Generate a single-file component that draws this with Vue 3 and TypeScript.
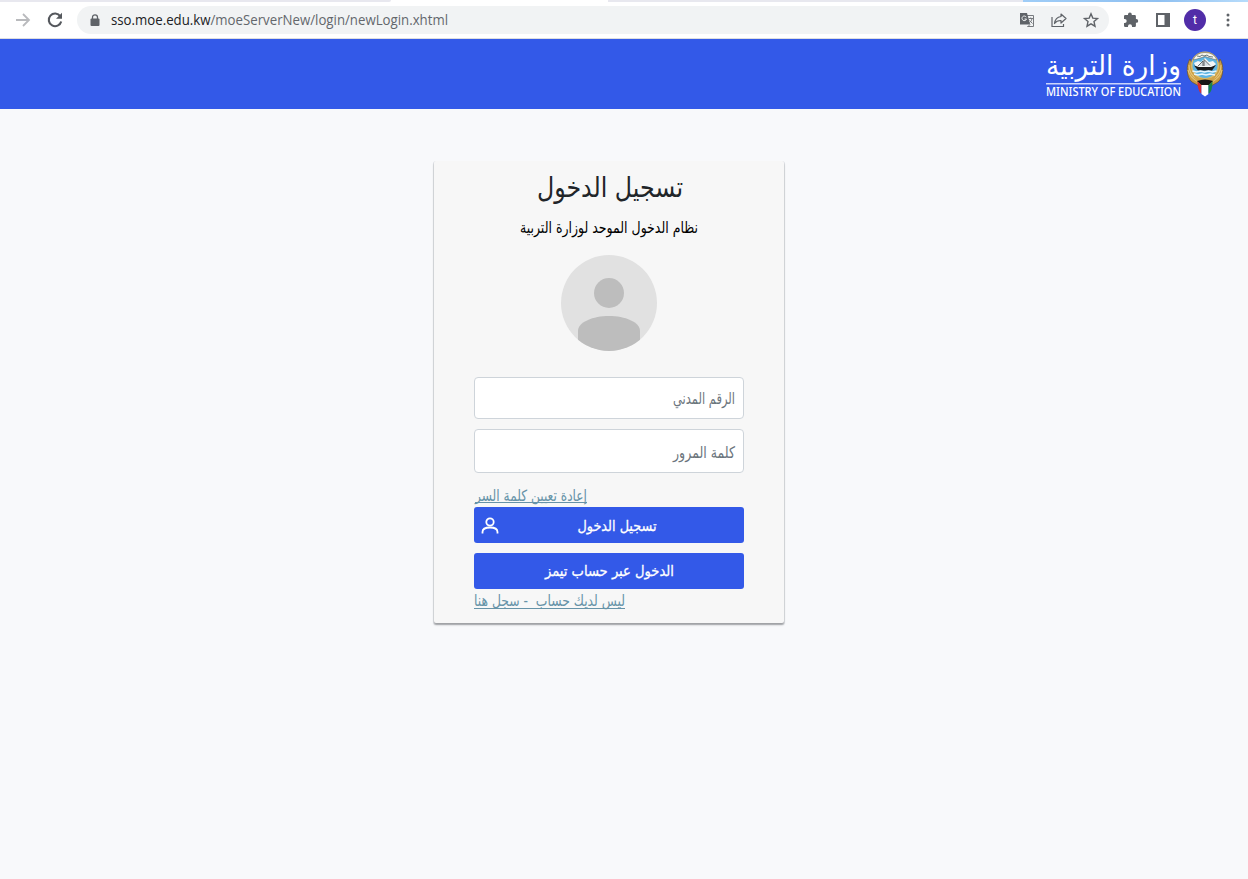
<script setup lang="ts">
import { ref } from 'vue'

interface Field {
  id: string
  type: string
  label: string
  width: number
}

const host = 'sso.moe.edu.kw'
const path = '/moeServerNew/login/newLogin.xhtml'

const fields: Field[] = [
  { id: 'civil', type: 'text', label: 'الرقم المدني', width: 62 },
  { id: 'password', type: 'password', label: 'كلمة المرور', width: 62 },
]
const values = ref<Record<string, string>>({ civil: '', password: '' })
</script>

<template>
  <div class="page">
    <div class="tabs"><i class="left"></i><i class="mid"></i><i class="right"></i></div>
    <div class="toolbar">
      <svg class="ic fwd" width="20" height="20" viewBox="0 0 20 20"><path d="M3 10h13M10 4l6 6-6 6" fill="none" stroke="#b9babd" stroke-width="1.8" /></svg>
      <svg class="ic reload" width="20" height="20" viewBox="0 0 20 20"><path d="M15.3 6.3A6.3 6.3 0 1 0 16.2 11.400" fill="none" stroke="#55585d" stroke-width="2.1" /><path d="M17 2.800v6h-6z" fill="#55585d" /></svg>
      <div class="omnibox">
        <svg class="lock" width="10" height="13" viewBox="0 0 10 13"><path d="M2.500 5V3.300a2.500 2.500 0 0 1 5 0V5" fill="none" stroke="#5f6368" stroke-width="1.300" /><rect x="0.500" y="4.500" width="9" height="7.500" rx="1" fill="#5f6368" /></svg>
        <svg class="url" width="345" height="22"><text x="0" y="16" textLength="337" lengthAdjust="spacingAndGlyphs"><tspan fill="#202124">{{ host }}</tspan><tspan fill="#63676c">{{ path }}</tspan></text></svg>
        <div class="actions">
          <svg width="16" height="16" viewBox="0 0 16 16"><path d="M6.500 3.500h8v11H8.500" fill="#f1f3f4" stroke="#777a7e" /><path d="M1 1h7l3.200 11.500H1z" fill="#5f6368" /><path d="M7.300 5.200A2.300 2.300 0 1 0 7.500 7H5.500" fill="none" stroke="#f1f3f4" stroke-width="1" /><path d="M9.500 6.500h4.500M11.700 5.500v1M13 6.500c-.5 2.500-1.500 3.500-3 4.500M10.500 8.500l3 3M8.500 15l2.500-2.500" fill="none" stroke="#777a7e" /></svg>
          <svg width="16" height="16" viewBox="0 0 16 16"><path d="M1 5v9.500h11.500V12" fill="none" stroke="#5f6368" stroke-width="1.200" /><path d="M10 2l5 4.500-5 4.500V8.500C7 8.400 5 9.400 3.500 11.500 4 7.500 6 5 10 4.500z" fill="none" stroke="#5f6368" stroke-width="1.200" stroke-linejoin="round" /></svg>
          <svg width="16" height="16" viewBox="0 0 16 16"><path d="M8 1.800l1.800 4.300 4.700.4-3.500 3.100 1 4.600L8 11.800l-4 2.400 1-4.600-3.500-3.100 4.700-.4z" fill="none" stroke="#5f6368" stroke-width="1.400" /></svg>
        </div>
      </div>
      <svg class="puzzle" width="16" height="16" viewBox="0 0 16 16"><path d="M1 4.200Q1 3 2.200 3H5V2.500a1.900 1.900 0 0 1 3.800 0V3h2.900q1.200 0 1.200 1.200V7h.4a1.900 1.900 0 0 1 0 3.800h-.4v3q0 1.200-1.200 1.200H9v-.7a2 2 0 0 0-4 0v.7H2.200Q1 15 1 13.800V11h.7a2 2 0 0 0 0-4H1z" fill="#5f6368" /></svg>
      <svg class="panel" width="14" height="14" viewBox="0 0 14 14"><path d="M0 0h14v14H0zM2 2v10h6.500V2z" fill="#5f6368" fill-rule="evenodd" /></svg>
      <div class="profile">t</div>
      <svg class="dots" width="4" height="14" viewBox="0 0 4 14"><circle v-for="n in 3" :key="n" cx="2" :cy="n * 5 - 3" r="1.500" fill="#5f6368" /></svg>
    </div>

    <header class="banner">
      <svg class="brand" width="138" height="50" viewBox="0 0 138 50">
        <text class="brand-ar" x="68.500" y="24.500" text-anchor="middle" textLength="135" lengthAdjust="spacingAndGlyphs">وزارة التربية</text>
        <rect x="1" y="33" width="135" height="1.500" fill="#cbd5fb" />
        <text class="brand-en" x="1" y="45.500" textLength="135" lengthAdjust="spacingAndGlyphs">MINISTRY OF EDUCATION</text>
      </svg>
      <svg class="emblem" width="38" height="46" viewBox="0 0 38 46">
        <path d="M4 8C0 14 0 26 6 31l7 4h12l7-4c6-5 6-17 2-23l-3 9-11 10L8 17z" fill="#c99b42" stroke="#6d5527" stroke-width=".7" />
        <path d="M3 14c0 7 4 12 9 15M2 19c1 6 5 9 10 12M35 14c0 7-4 12-9 15M36 19c-1 6-5 9-10 12" fill="none" stroke="#e6c577" stroke-width="1.100" />
        <circle cx="19" cy="14.500" r="13.300" fill="#5db4e2" stroke="#d9bb69" stroke-width="1.500" />
        <path d="M7 9q3-7.500 12-7.500T31 9l-4-1-8-2.500L11 8z" fill="#f8f7ed" stroke="#555" stroke-width=".5" />
        <path d="M11 5l3 .500 2-1.500 2 1 3-1 2 1.500 4 .500" fill="none" stroke="#45555a" stroke-width=".8" />
        <path d="M8 12l4-2 3 1 4-4 4 4 4-1 3 3-3 3H10z" fill="#f4f6f6" />
        <path d="M12 15l5-5v5M18 15V8.500l6 6" fill="#d8dee1" stroke="#41474a" stroke-width=".8" />
        <path d="M8 14.500l5 1.500h12l5-2-4 5.500H12z" fill="#191919" />
        <path d="M6.500 20l4 1 4-1 4 1 4-1 4 1 4-1M8 23l4 1 4-1 4 1 4-1 5 1" fill="none" stroke="#e5f6ff" stroke-width="1.300" />
        <path d="M8 25q11 6 22 0l-4 7H12z" fill="#d0a347" />
        <path d="M11 30q8-3 16 0l-4 4h-8z" fill="#171717" />
        <path d="M11.500 30.500l4 3.500v9q-4-3-4-12.500" fill="#d72e35" />
        <path d="M15.500 34h7v9L19 45.500 15.500 43z" fill="#fff" />
        <path d="M22.500 34l4-3.500q0 10-4 12.500z" fill="#16834c" />
      </svg>
    </header>

    <main>
      <form class="card" @submit.prevent>
        <svg class="title" width="350" height="48"><text x="176" y="36" text-anchor="middle" textLength="146" lengthAdjust="spacingAndGlyphs">تسجيل الدخول</text></svg>
        <svg class="subtitle" width="350" height="46"><text x="175" y="24" text-anchor="middle" textLength="178" lengthAdjust="spacingAndGlyphs">نظام الدخول الموحد لوزارة التربية</text></svg>
        <svg class="avatar" width="96" height="96" viewBox="0 0 96 96">
          <defs><clipPath id="disc"><circle cx="48" cy="48" r="48" /></clipPath></defs>
          <circle cx="48" cy="48" r="48" fill="#e1e1e1" />
          <g clip-path="url(#disc)" fill="#bdbdbd"><circle cx="48" cy="38" r="15" /><path d="M17 96V76C17 67 32 61 48 61s31 6 31 15v20z" /></g>
        </svg>
        <div class="form-body">
          <label v-for="f in fields" :key="f.id" class="field" :class="f.id">
            <input v-model="values[f.id]" :type="f.type" :aria-label="f.label" />
            <svg v-if="!values[f.id]" class="hint" width="70" height="30"><text x="35" y="20.500" text-anchor="middle" :textLength="f.width" lengthAdjust="spacingAndGlyphs">{{ f.label }}</text></svg>
          </label>
          <a class="link reset"><svg width="114" height="24"><text x="57" y="17.500" text-anchor="middle" textLength="112" lengthAdjust="spacingAndGlyphs">إعادة تعيين كلمة السر</text><path d="M1 19.500h112" /></svg></a>
          <button class="btn">
            <svg class="user" width="18" height="18" viewBox="0 0 18 18"><circle cx="9" cy="5" r="3.700" /><path d="M1.500 16.500v-1.500c0-3 3-4.500 7.500-4.500s7.500 1.500 7.500 4.500v1.500" /></svg>
            <svg class="caption" width="270" height="36"><text x="143" y="24" text-anchor="middle" textLength="79" lengthAdjust="spacingAndGlyphs">تسجيل الدخول</text></svg>
          </button>
          <button class="btn teams"><svg class="caption" width="270" height="36"><text x="135.500" y="23" text-anchor="middle" textLength="129" lengthAdjust="spacingAndGlyphs">الدخول عبر حساب تيمز</text></svg></button>
          <a class="link"><svg width="152" height="24"><text x="75.500" y="17" text-anchor="middle" textLength="151" lengthAdjust="spacingAndGlyphs">ليس لديك حساب&nbsp; - سجل هنا</text><path d="M0 19.500h151" /></svg></a>
        </div>
      </form>
    </main>
  </div>
</template>

<style>
html, body { margin: 0; background: #f8f9fb; }
</style>

<style scoped>
* { box-sizing: border-box; }
.page { width: 1248px; height: 879px; overflow: hidden; background: #f8f9fb; font-family: "DejaVu Sans", sans-serif; }
svg { display: block; flex: none; overflow: visible; }
svg text { direction: rtl; font-family: "DejaVu Sans", sans-serif; }
.tabs { display: flex; justify-content: space-between; height: 2px; background: #fff; }
.tabs .left { width: 391px; background: #e8e8ef; border-bottom-right-radius: 2px; }
.tabs .mid { width: 415px; margin-left: 217px; background: #e8e8ef; }
.tabs .right { flex: 1; background: linear-gradient(90deg, #9fcdf7, #8fc0f1 60%, #b7dcfb); }
.toolbar { display: flex; align-items: center; height: 37px; background: #fff; border-bottom: 1px solid #dcdde0; }
.fwd { margin-left: 13px; }
.reload { margin-left: 12px; }
.omnibox { display: flex; align-items: center; width: 1032px; height: 28px; margin-left: 12px; padding: 0 10px 0 13px; border-radius: 14px; background: #f1f3f4; }
.url { margin-left: 11px; }
.url text { direction: ltr; font-family: "Open Sans", "Noto Sans", sans-serif; font-size: 14px; }
.actions { display: flex; gap: 16px; margin-left: auto; }
.puzzle { margin-left: 14px; }
.panel { margin-left: 17px; }
.profile { display: flex; align-items: center; justify-content: center; width: 22px; height: 22px; margin-left: 14px; border-radius: 50%; background: #512da8; color: #fff; font: 12px Roboto, sans-serif; }
.dots { margin-left: 20px; }
.banner { display: flex; justify-content: flex-end; height: 70px; padding: 11px 24px 0 0; background: #3359e8; }
.brand { margin-right: 3px; }
.emblem { margin-top: 1px; }
.brand text { fill: #fff; }
.brand .brand-ar { font-size: 28px; }
.brand .brand-en { direction: ltr; font-family: "Noto Sans", "Open Sans", sans-serif; font-size: 12px; font-weight: 500; }
main { display: flex; padding: 52px 0 0 434px; }
.card { display: flex; flex-direction: column; align-items: center; width: 350px; height: 462px; background: #f7f7f7; border-radius: 2px; box-shadow: 0 2px 2px rgba(0, 0, 0, .3), 0 1px 0 1px rgba(40, 60, 80, .1); }
.title text { font-size: 28px; fill: #212529; }
.subtitle text { font-size: 16px; fill: #000; }
.form-body { width: 270px; padding-top: 26px; }
.field { display: flex; position: relative; height: 42px; margin-bottom: 10px; }
.field.password { height: 44px; margin-bottom: 10px; }
.field input { width: 100%; height: 100%; padding: 0 8px; border: 1px solid #ced4da; border-radius: 4px; background: #fff; direction: rtl; outline: none; font-size: 15px; }
.hint { position: absolute; right: 5px; top: 6px; pointer-events: none; }
.password .hint { top: 8px; }
.hint text { font-size: 16px; fill: #6c757d; }
.link { display: block; height: 24px; }
.link text { font-size: 15.500px; fill: #6693a8; }
.link path { stroke: #6693a8; stroke-width: 1; }
.btn { display: flex; position: relative; width: 270px; height: 36px; padding: 0; border: 0; border-radius: 3px; background: #3359e8; }
.teams { margin-top: 10px; }
.caption text { font-size: 14.500px; font-weight: 400; fill: #fff; stroke: #fff; stroke-width: .3px; }
.user { position: absolute; left: 7px; top: 9.500px; fill: none; stroke: #fff; stroke-width: 1.800px; }
</style>
